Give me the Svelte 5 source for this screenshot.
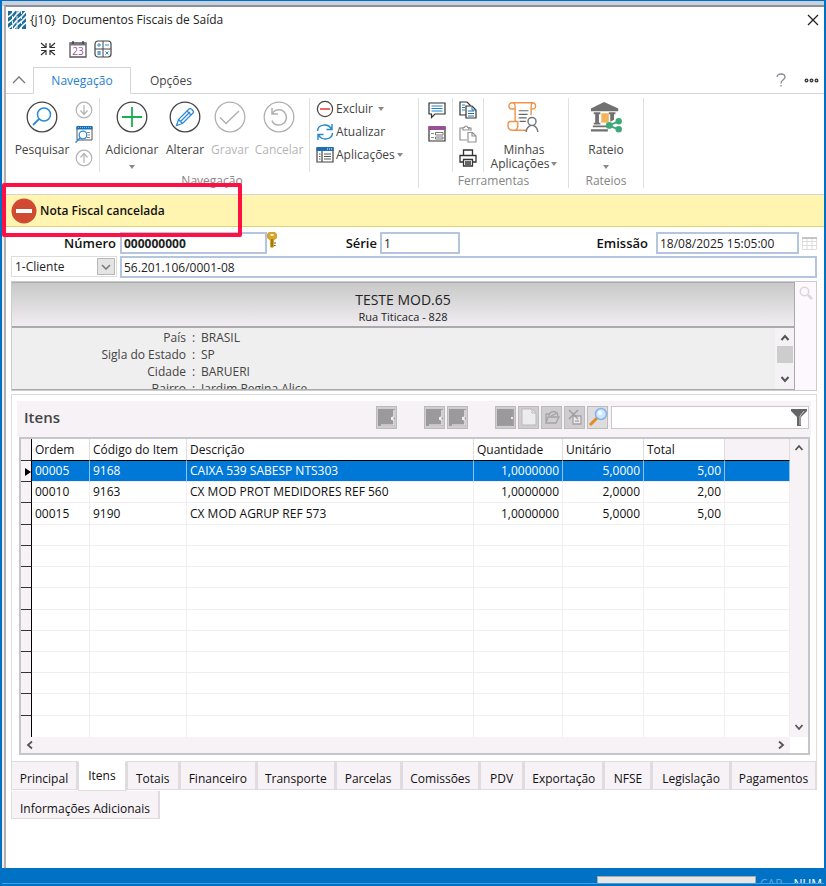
<script>
  const people = [
    ['País', 'BRASIL'],
    ['Sigla do Estado', 'SP'],
    ['Cidade', 'BARUERI'],
    ['Bairro', 'Jardim Regina Alice']
  ];
  const rows = [
    ['00005', '9168', 'CAIXA 539 SABESP NTS303', '1,0000000', '5,0000', '5,00'],
    ['00010', '9163', 'CX MOD PROT MEDIDORES REF 560', '1,0000000', '2,0000', '2,00'],
    ['00015', '9190', 'CX MOD AGRUP REF 573', '1,0000000', '5,0000', '5,00']
  ];
  const blanks = Array.from({ length: 10 });
  const tabs = [
    ['Principal', 67], ['Itens', 48], ['Totais', 52], ['Financeiro', 78],
    ['Transporte', 79], ['Parcelas', 66], ['Comissões', 79], ['PDV', 43],
    ['Exportação', 81], ['NFSE', 47], ['Legislação', 79], ['Pagamentos', 87]
  ];
  let active = $state('Itens');
  let selected = $state(0);
</script>

{#snippet caret()}
  <svg class="caret" width="6" height="4" viewBox="0 0 6 4"><path d="M0 0h6L3 4z" fill="#8a8a8a" /></svg>
{/snippet}

{#snippet door(full)}
  <svg width="20" height="20" viewBox="0 0 20 20"><path d="M1 2h17v17H1z" fill="#a19ea1" /><path d="M1 2h15v16H1z" fill="#9b999c" />{#if full}<path d="M17 3v7h-1v3h1v5H4" fill="none" stroke="#f3f0f3" stroke-width="1.2" /><path d="M14 10h2v3h-2z" fill="#eee" />{:else}<path d="M15 10h2v2h-2z" fill="#eee" />{/if}</svg>
{/snippet}

<div class="screen">
  <div class="window">
    <header class="title">
      <svg width="18" height="18" viewBox="0 0 18 18">
        <path d="M0 0h18v18H0z" fill="#1b6d9c" />
        <path d="M-1 6.500 3 4l4-5M-1 12.500 4 9l4-5 5-5M-1 18.500 5 14l4-5 5-4 5-6M5 19l5-6 4-3 5-5M11 19l4-5 4-3" stroke="#fff" stroke-width="1.600" fill="none" />
        <path d="M4.500 0v18M9 0v18M13.500 0v18" stroke="#fff" stroke-width=".9" stroke-dasharray="3 2" />
      </svg>
      <h1>&#123;j10&#125;&nbsp; Documentos Fiscais de Saída</h1>
      <button class="close" aria-label="Fechar">
        <svg width="12" height="12" viewBox="0 0 12 12"><path d="m1 1 10 10M11 1 1 11" stroke="#222" stroke-width="1.3" /></svg>
      </button>
    </header>

    <div class="quick">
      <button aria-label="Recolher">
        <svg width="16" height="16" viewBox="0 0 16 16" fill="none" stroke="#333" stroke-width="1.2"><path d="m1 2 5 4.500M6 2v4.500H1M15 2l-5 4.500M10 2v4.500h5M1 14l5-4.500M6 14V9.500H1M15 14l-5-4.500M10 14V9.500h5" /></svg>
      </button>
      <button class="date" aria-label="Calendário">
        <svg width="18" height="17" viewBox="0 0 18 17" fill="none"><path d="M1 2h16v14H1z" stroke="#555" stroke-width="1.3" /><path d="M1 2h16v2.500H1z" fill="#777" /><path d="M4 0v3M14 0v3" stroke="#444" stroke-width="1.500" /></svg>
        <span>23</span>
      </button>
      <button aria-label="Calculadora">
        <svg width="18" height="18" viewBox="0 0 18 18" fill="none"><rect x="1" y="1" width="16" height="16" rx="3" stroke="#444" stroke-width="1.200" /><path d="M9 1v16M1 9h16" stroke="#444" /><path d="M3 5h4M5 3v4M11 5h4M3 12h4M5 11v4M3 14h4M11.500 11.500l3 3M14.500 11.500l-3 3M12 13h2" stroke="#2b8bd0" /></svg>
      </button>
    </div>

    <nav class="ribbon-tabs">
      <button class="fold" aria-label="Recolher faixa"><svg width="14" height="8" viewBox="0 0 14 8"><path d="m1 7 6-6 6 6" fill="none" stroke="#777" stroke-width="1.300" /></svg></button>
      <button class="rtab on">Navegação</button>
      <button class="rtab">Opções</button>
      <button class="help" aria-label="Ajuda"><svg width="10" height="14" viewBox="0 0 10 14"><path d="M1 4c0-4 8-4 8 0 0 3-4 2.500-4 6.500M5 12v1.500" fill="none" stroke="#888c98" stroke-width="1.300" /></svg></button>
      <button class="more" aria-label="Mais"><svg width="15" height="5" viewBox="0 0 15 5" fill="#ccc" stroke="#333" stroke-width="1.200"><circle cx="2.500" cy="2.500" r="1.400" /><circle cx="7.500" cy="2.500" r="1.400" /><circle cx="12.500" cy="2.500" r="1.400" /></svg></button>
    </nav>

    <div class="ribbon">
      <section class="group g1">
        <div class="tools">
          <button class="big w60">
            <svg width="32" height="32" viewBox="0 0 32 32" fill="none"><circle cx="16" cy="16" r="14.800" stroke="#444" stroke-width="1.300" /><circle cx="18" cy="13.500" r="6.500" stroke="#2b8bd8" stroke-width="1.500" /><path d="m13 18-6 6" stroke="#2b8bd8" stroke-width="1.800" /></svg>
            <span>Pesquisar</span>
          </button>
          <div class="stack s1">
            <button aria-label="Próximo"><svg width="18" height="18" viewBox="0 0 18 18" fill="none" stroke="#b3b3b3" stroke-width="1.200"><circle cx="9" cy="9" r="7.800" /><path d="M9 4v9.500M5.500 9.500 9 13.500l3.500-4" /></svg></button>
            <button aria-label="Consultar"><svg width="18" height="18" viewBox="0 0 18 18" fill="none"><path d="M2 2h15v13H2z" stroke="#555" /><path d="M1.500 1h16v3.500h-16z" fill="#1c6fb5" /><path d="M3 2.500h13" stroke="#7db9e8" stroke-dasharray="1 1" /><path d="M12 7.500h3M13 10h2M12 12.500h3" stroke="#888" /><circle cx="8" cy="10" r="3.800" fill="#fff" stroke="#2b8bd8" stroke-width="1.300" /><path d="M5.500 12.500.500 17.500" stroke="#2b8bd8" stroke-width="1.500" /></svg></button>
            <button aria-label="Anterior"><svg width="18" height="18" viewBox="0 0 18 18" fill="none" stroke="#b3b3b3" stroke-width="1.200"><circle cx="9" cy="9" r="7.800" /><path d="M9 14V4.500M5.500 8.500 9 4.500l3.500 4" /></svg></button>
          </div>
          <i class="sep"></i>
          <button class="big w64">
            <svg width="32" height="32" viewBox="0 0 32 32" fill="none"><circle cx="16" cy="16" r="14.800" stroke="#444" stroke-width="1.300" /><path d="M16 6v20M6 16h20" stroke="#17b052" stroke-width="1.800" /></svg>
            <span>Adicionar</span>{@render caret()}
          </button>
          <button class="big w42">
            <svg width="32" height="32" viewBox="0 0 32 32" fill="none"><circle cx="16" cy="16" r="14.800" stroke="#444" stroke-width="1.300" /><path d="m7.500 24.500 2-6L20 8c1.500-1.500 5.500 2 4 4L13.500 22.500zM18 10l4 4M9.500 18.500l4 4M11.500 20.500 21 11" stroke="#2b8bd8" stroke-width="1.300" /></svg>
            <span>Alterar</span>
          </button>
          <button class="big w48" disabled>
            <svg width="32" height="32" viewBox="0 0 32 32" fill="none" stroke="#b0b0b0"><circle cx="16" cy="16" r="14.800" stroke-width="1.300" /><path d="m6 16.500 6 6L25 10" stroke-width="1.500" /></svg>
            <span>Gravar</span>
          </button>
          <button class="big w50" disabled>
            <svg width="32" height="32" viewBox="0 0 32 32" fill="none" stroke="#b0b0b0"><circle cx="16" cy="16" r="14.800" stroke-width="1.300" /><path d="M9 7v6h6M9.500 12.500c3-5 10.500-5 13 .5s-1 11-7 11c-3 0-5.500-1.500-6.500-4.500" stroke-width="1.500" /></svg>
            <span>Cancelar</span>
          </button>
          <i class="sep s2"></i>
          <div class="lines">
            <button><svg width="18" height="18" viewBox="0 0 18 18" fill="none"><circle cx="9" cy="9" r="7.600" stroke="#444" stroke-width="1.200" /><path d="M4 9h10" stroke="#e33" stroke-width="1.500" /></svg>Excluir&nbsp; {@render caret()}</button>
            <button><svg width="18" height="18" viewBox="0 0 18 18" fill="none" stroke="#1e86cc" stroke-width="1.400"><path d="M1.500 8C2 1 12 0 15.500 6M16 1v5.500h-5.500M16.500 10C16 17 6 18 2.500 12M2 17v-5.500h5.500" /></svg>Atualizar</button>
            <button><svg width="18" height="18" viewBox="0 0 18 18" fill="none"><path d="M1 2h16v14H1zM6 5v11" stroke="#444" stroke-width="1.200" /><path d="M.500 1h17v4H.500z" fill="#1c6fb5" /><path d="M8 8h7M8 10.500h7M8 13h7M3 8h1.500M3 10.500h1.500M3 13h1.500" stroke="#555" /><path d="M11 3h1M13 3h1M15 3h1" stroke="#fff" /></svg>Aplicações {@render caret()}</button>
          </div>
        </div>
        <h2>Navegação</h2>
      </section>

      <section class="group g2">
        <div class="tools">
          <div class="stack s3">
            <button aria-label="Comentário"><svg width="18" height="18" viewBox="0 0 18 18" fill="none"><path d="M1 2h16v11H7l-3.500 3.500V13H1z" stroke="#333" stroke-width="1.200" /><path d="M3.500 5h11M3.500 7.500h11M3.500 10h11" stroke="#1e86cc" stroke-width="1.200" /></svg></button>
            <button aria-label="Formulário"><svg width="18" height="18" viewBox="0 0 18 18" fill="none"><path d="M1 2h16v14H1z" stroke="#333" stroke-width="1.200" /><path d="M.500 1h17v4H.500z" fill="#9b4f96" /><path d="M3 8.500h3M3 12.500h3" stroke="#888" /><path d="M7.500 7.500h7.500v2.500H7.500zM7.500 12h7.500v2H7.500z" stroke="#777" /></svg></button>
          </div>
          <i class="sep"></i>
          <div class="stack s4">
            <button aria-label="Copiar"><svg width="18" height="18" viewBox="0 0 18 18" fill="none"><path d="M1 1h7l3 3v10H1z" stroke="#333" stroke-width="1.200" fill="#fff" /><path d="M3 4h3M3 6.500h3M3 9h3" stroke="#1e86cc" /><path d="M7 5h6l4 4v8H7z" fill="#fff" stroke="#333" stroke-width="1.200" /><path d="M13 5v4h4M9 10h6M9 12.500h6M9 15h6" stroke="#1e6fb0" /></svg></button>
            <button aria-label="Colar"><svg width="18" height="18" viewBox="0 0 18 18" fill="none" stroke="#929292" stroke-width="1.200"><path d="M8 15H1V3h3M12 6V3H9M4 4V2.500h1.500c0-2 3-2 3 0H10V5H4zM9 7.500h4.500L17 11v6H9zM13 7.500V11h4" /></svg></button>
            <button aria-label="Imprimir"><svg width="18" height="18" viewBox="0 0 18 18" fill="none" stroke="#333" stroke-width="1.300"><path d="M4.500 6V1h9v5M4 13H1V6.500h16V13h-3M4.500 10.500h9V17h-9zM6 13h6M6 15h6" /></svg></button>
          </div>
          <i class="sep"></i>
          <button class="big w80">
            <svg width="36" height="36" viewBox="0 0 36 36" fill="none"><path d="M8 23V6.500C8 4 7 2 5 2h22c3 0 4 1.500 4 4s-1 3-4 3h-1V6c0-3 2-4 2-4M5 2C2 2 1 4 1 6s1 3 3 3h4M26 9v7M8 23H2.500C1 23 0 24 0 27s1.500 6 5 6h16M8 23h3v5c0 3-2 5-5 5" stroke="#f0934b" stroke-width="1.600" /><path d="M12 11h11M12 15h10M12 19h9M13 23h7" stroke="#666" stroke-width="1.300" /><circle cx="27" cy="23" r="4.500" fill="#fff" stroke="#73777e" stroke-width="1.600" /><path d="M20.500 35c0-4 2-6 5-7.500M33.500 35c0-4-2-6-5-7.500" stroke="#73777e" stroke-width="1.600" /></svg>
            <span>Minhas</span><span class="second">Aplicações{@render caret()}</span>
          </button>
        </div>
        <h2>Ferramentas</h2>
      </section>

      <section class="group g3">
        <div class="tools">
          <button class="big w74">
            <svg width="34" height="34" viewBox="0 0 34 34"><path d="M1 8 15 1l15 7v3H1z" fill="#707070" /><path d="M4 12h7v2H9.500v9H11v2H4v-2h1.500v-9H4zM20 12h7v2h-1.500v6L21.500 22v-8H20z" fill="#707070" /><path d="M12 13h8v10h-8z" fill="#f1b45b" /><path d="M3 26h16v2H3zM1 30h18v2.500H1z" fill="#707070" /><path d="m32 21-12 5 12 5" fill="none" stroke="#3fa878" stroke-width="2" /><circle cx="30.500" cy="21.500" r="3.400" fill="#3fa878" /><circle cx="20.500" cy="26" r="3.600" fill="#3fa878" /><circle cx="30.500" cy="30" r="3.400" fill="#3fa878" /></svg>
            <span>Rateio</span>{@render caret()}
          </button>
        </div>
        <h2>Rateios</h2>
      </section>
    </div>

    <div class="alert" role="alert">
      <svg width="26" height="26" viewBox="0 0 26 26"><circle cx="13" cy="13" r="12.500" fill="#cf4a31" /><path d="M5 11h16v4H5z" fill="#fff" /></svg>
      <strong>Nota Fiscal cancelada</strong>
    </div>

    <main>
      <div class="fields">
        <label class="l1" for="numero">Número</label>
        <input id="numero" class="numero" value="000000000" />
        <svg width="10" height="16" viewBox="0 0 10 16"><path d="M2 0h6l2 2v4L7 8.500V15l-2 1-2-1V8.500L0 6V2z" fill="#d5a52c" /><path d="M3.500 2h3v2h-3z" fill="#fff8d0" /><path d="M5 7v8M7 11h2M7 13.500h1.500" stroke="#75520c" /></svg>
        <label class="l2" for="serie">Série</label>
        <input id="serie" class="serie" value="1" />
        <label class="l3" for="emissao">Emissão</label>
        <input id="emissao" class="emissao" value="18/08/2025 15:05:00" />
        <svg class="cal" width="15" height="14" viewBox="0 0 15 14" fill="none"><path d="M.500 1.500h14v12H.500zM.500 5.500h14M.500 9.500h14M5 3v10M10 3v10" stroke="#ddd" /><path d="M0 1h15v2H0z" fill="#c4c4c4" /></svg>
      </div>
      <div class="client">
        <div class="pick">
          <select aria-label="Tipo de cliente"><option>1-Cliente</option></select>
          <span class="drop"><svg width="10" height="6" viewBox="0 0 10 6"><path d="m1 1 4 4 4-4" fill="none" stroke="#777" stroke-width="1.500" /></svg></span>
        </div>
        <input aria-label="CNPJ do cliente" value="56.201.106/0001-08" />
      </div>

      <section class="person">
        <div class="card">
          <div class="head"><h3>TESTE MOD.65</h3><p>Rua Titicaca - 828</p></div>
          <div class="body">
            <dl>
              {#each people as [k, v]}<div><dt>{k}</dt><span>:</span><dd>{v}</dd></div>{/each}
            </dl>
            <div class="vbar">
              <svg width="10" height="8" viewBox="0 0 10 8"><path d="m1.500 6 3.500-4 3.500 4" fill="none" stroke="#555" stroke-width="2" /></svg>
              <i></i>
              <svg width="10" height="8" viewBox="0 0 10 8"><path d="m1.500 2 3.500 4 3.500-4" fill="none" stroke="#555" stroke-width="2" /></svg>
            </div>
          </div>
        </div>
        <button class="side" aria-label="Ampliar"><svg width="14" height="14" viewBox="0 0 14 14" fill="none" stroke="#d8d8d8" stroke-width="1.500"><circle cx="5.500" cy="5.500" r="4.200" /><path d="m9 9 4 4" stroke-width="2.500" /></svg></button>
      </section>

      <section class="items">
        <div class="bar">
          <h3>Itens</h3>
          <div class="btns">
            <button aria-label="Primeiro">{@render door(true)}</button>
            <button class="far" aria-label="Anterior item">{@render door(true)}</button>
            <button aria-label="Próximo item">{@render door(true)}</button>
            <button class="far" aria-label="Último">{@render door(false)}</button>
            <button aria-label="Novo"><svg width="20" height="20" viewBox="0 0 20 20"><path d="M3 2h10l4 4v12H3z" fill="#ececec" stroke="#bbb" /><path d="M13 2v4h4" fill="none" stroke="#bbb" /></svg></button>
            <button aria-label="Abrir"><svg width="20" height="20" viewBox="0 0 20 20" fill="none" stroke="#a5a3a6" stroke-width="1.300"><path d="m4 16 2-6h11l-3 6zM4 16V7h4M7 9c0-4 5-6 8-3M9 9l6-3 1 3" /></svg></button>
            <button aria-label="Excluir item"><svg width="20" height="20" viewBox="0 0 20 20" fill="none" stroke="#a5a3a6" stroke-width="1.300"><path d="M8 9h8v8H8z" fill="#e8e8e8" /><path d="m4 3 9 9M13 3 4 12" stroke="#9c9a9d" /><path d="M10 14h4" /></svg></button>
            <button class="lens" aria-label="Localizar"><svg width="20" height="20" viewBox="0 0 20 20"><path d="m9 11-7 7" stroke="#e48a24" stroke-width="3" /><circle cx="13" cy="7" r="5.500" fill="#cbe8ff" stroke="#89aee8" stroke-width="1.500" /><circle cx="12" cy="6" r="2" fill="#fff" /></svg></button>
          </div>
          <div class="find">
            <input aria-label="Filtrar itens" />
            <svg width="16" height="17" viewBox="0 0 16 17"><path d="M0 0h16v2l-6 6v9H6V8L0 2z" fill="#656565" /><path d="m13 2-4 5v9" fill="none" stroke="#ccc" /></svg>
          </div>
        </div>

        <div class="grid">
          <div class="data">
            <table>
              <colgroup><col class="c0" /><col class="c1" /><col class="c2" /><col /><col class="c4" /><col class="c5" /><col class="c5" /><col class="c7" /></colgroup>
              <thead><tr><td class="mark"></td><th>Ordem</th><th>Código do Item</th><th>Descrição</th><th>Quantidade</th><th>Unitário</th><th>Total</th><td class="rest"></td></tr></thead>
              <tbody>
                {#each rows as row, i}
                  <tr class:sel={selected === i} onclick={() => (selected = i)}>
                    <td class="mark">{#if selected === i}<svg width="6" height="8" viewBox="0 0 6 8"><path d="M0 0v8l6-4z" /></svg>{/if}</td>
                    {#each row as cell, j}<td class:num={j > 2}>{cell}</td>{/each}
                    <td></td>
                  </tr>
                {/each}
                {#each blanks as _}
                  <tr><td class="mark"></td><td></td><td></td><td></td><td></td><td></td><td></td><td></td></tr>
                {/each}
              </tbody>
            </table>
            <div class="vscroll">
              <svg width="10" height="8" viewBox="0 0 10 8"><path d="m1.500 6 3.500-4 3.500 4" fill="none" stroke="#555" stroke-width="1.800" /></svg>
              <svg width="10" height="8" viewBox="0 0 10 8"><path d="m1.500 2 3.500 4 3.500-4" fill="none" stroke="#555" stroke-width="1.800" /></svg>
            </div>
          </div>
          <div class="hscroll">
            <svg width="8" height="10" viewBox="0 0 8 10"><path d="M6 1.500 2 5l4 3.500" fill="none" stroke="#555" stroke-width="1.800" /></svg>
            <svg width="8" height="10" viewBox="0 0 8 10"><path d="m2 1.500 4 3.500-4 3.500" fill="none" stroke="#555" stroke-width="1.800" /></svg>
          </div>
        </div>
      </section>

      <nav class="tabs">
        {#each tabs as [name, w]}
          <button class:on={active === name} style:flex-grow={w} onclick={() => (active = name)}>{name}</button>
        {/each}
      </nav>
      <nav class="tabs more-tabs"><button>Informações Adicionais</button></nav>
    </main>

    <div class="highlight"></div>
  </div>

  <footer><span class="progress"></span><span class="cap">CAP</span><span>NUM</span></footer>
</div>

<style>
  :global(body) { margin: 0; }
  .screen, .screen :global(*) { box-sizing: border-box; }
  .screen {
    font: 12px/16px "Open Sans", "Noto Sans", sans-serif;
    color: #222;
    min-height: 100vh;
    display: flex;
    flex-direction: column;
    border: solid #0072c6;
    border-width: 1px 2px 2px;
    background: linear-gradient(#c9d1df, #c9d1df) 0 0 / 100% 5px no-repeat, #f3edf1;
    overflow: hidden;
  }
  button { font: inherit; color: inherit; background: none; border: 0; padding: 0; margin: 0; white-space: nowrap; }
  h1, h2, h3, p, dl, dd { margin: 0; font: inherit; }
  svg { display: block; flex: none; }
  input, select { font: inherit; color: inherit; border-radius: 0; outline: 0; min-width: 0; }

  .window {
    position: relative;
    flex: 1;
    margin: 4px 0 0 2px;
    border-top: 2px solid #8d9099;
    border-left: 2px solid #b5afb3;
    background: #fff;
  }
  .title { display: flex; align-items: center; height: 26px; padding: 0 5px 0 2px; }
  .title h1 { flex: 1; margin-left: 4px; }
  .quick { display: flex; align-items: center; height: 34px; padding: 0 0 2px 34px; }
  .quick button { position: relative; margin-right: 7px; }
  .quick button:first-child { margin-right: 13px; }
  .date span { position: absolute; left: 0; top: 4px; width: 18px; text-align: center; color: #a64ca6; font-size: 10px; line-height: 12px; }

  .ribbon-tabs { display: flex; height: 27px; border-bottom: 1px solid #d4d4d4; }
  .fold { width: 27px; padding-left: 6px; }
  .rtab { width: 98px; height: 27px; color: #444; border: 1px solid transparent; }
  .rtab + .rtab { width: 80px; }
  .rtab.on { color: #1e7fd0; background: #fff; border-color: #d4d4d4 #d4d4d4 #fff; }
  .help { margin-left: auto; }
  .more { margin: 0 5px 0 18px; }

  .ribbon { display: flex; height: 101px; padding: 4px 0 6px; border-bottom: 1px solid #d4d4d4; color: #444; }
  .group { border-right: 1px solid #e0e0e0; display: flex; flex-direction: column; }
  .group h2 { text-align: center; color: #858585; line-height: 15px; }
  .g1 { width: 413px; }
  .g2 { width: 150px; }
  .g3 { width: 75px; }
  .tools { display: flex; height: 76px; }
  .g1 .tools { padding-left: 6px; }
  .sep { width: 1px; height: 74px; background: #e0e0e0; }
  .s2 { margin-left: 5px; }
  .big { display: flex; flex-direction: column; align-items: center; padding-top: 3px; }
  .big > svg:first-child { height: 32px; overflow: visible; }
  .big span { margin-top: 9px; line-height: 16px; }
  .big > .caret { margin-top: 7px; }
  .w80 span { margin-top: 10px; line-height: 14px; }
  .big .second { margin: 0; display: flex; align-items: center; gap: 2px; }
  .big:disabled { color: #b5b5b5; }
  .w60 { width: 60px; }
  .w64 { width: 64px; }
  .w42 { width: 42px; }
  .w48 { width: 48px; }
  .w50 { width: 50px; }
  .w80 { width: 80px; }
  .w74 { width: 74px; }
  .stack { display: flex; flex-direction: column; gap: 6px; padding-top: 3px; align-items: center; }
  .s1 { width: 27px; padding-right: 3px; }
  .s3 { width: 33px; padding-left: 3px; }
  .s4 { width: 30px; }
  .lines { display: flex; flex-direction: column; gap: 5px; padding: 2px 0 0 6px; }
  .lines button { display: flex; align-items: center; gap: 2px; }

  .alert { display: flex; align-items: center; gap: 3px; height: 32px; padding-left: 5px; background: #fff4b0; border-bottom: 1px solid #d9d676; color: #111; }
  .alert strong { font-weight: 600; padding-top: 1px; }
  main { padding: 5px 7px 0 5px; }
  .fields, .client { display: flex; }
  .fields { height: 24px; padding-bottom: 2px; }
  .fields label { font-size: 13px; font-weight: 600; line-height: 22px; color: #111; text-align: right; }
  .fields input, .client input {
    height: 22px;
    padding: 0 2px;
    border: 2px solid #b4c5e0;
    background: #fff;
    line-height: 16px;
  }
  .client input { flex: 1; }
  .l1 { width: 109px; padding-right: 4px; }
  .fields .numero { width: 147px; font-weight: 700; }
  .l2 { width: 103px; padding-right: 3px; }
  .serie { width: 80px; }
  .l3 { margin-left: auto; padding-right: 8px; }
  .emissao { width: 143px; }
  .cal { margin: 4px 0 0 3px; }
  .pick { position: relative; width: 106px; margin-right: 3px; }
  .pick select { width: 100%; height: 21px; padding: 0 3px; border: 1px solid #ddd; background: #fff; appearance: none; }
  .drop { position: absolute; right: 2px; top: 2px; width: 18px; height: 17px; display: grid; place-items: center; background: #e4e4e4; border: 1px solid #b8b8b8; pointer-events: none; }

  .person { display: flex; height: 110px; margin-top: 3px; border: 1px solid #ccc; }
  .card { flex: 1; border: solid #aaa; border-width: 1px 1px 1px 0; }
  .head { height: 45px; padding-top: 8px; border-bottom: 2px solid #aaa; background: linear-gradient(#c9c9c9, #f0edf0); text-align: center; }
  .head h3 { font-size: 14px; line-height: 18px; }
  .head p { font-size: 11px; }
  .body { display: flex; height: 61px; background: #efefef; overflow: hidden; color: #444; }
  dl { flex: 1; padding-top: 2px; }
  dl div { display: flex; height: 17px; }
  dt { width: 174px; text-align: right; }
  dl span { width: 15px; text-align: center; }
  .vbar { width: 19px; display: flex; flex-direction: column; align-items: center; justify-content: space-between; padding: 6px 0; background: #f5f2f5; }
  .vbar i { width: 16px; height: 17px; margin-bottom: 8px; background: #cdcdcd; }
  .side { width: 21px; background: #fdf8fd; display: flex; justify-content: center; padding-top: 4px; }

  .items { margin-top: 3px; border: 1px solid #ddd; border-bottom: 0; padding: 6px 5px; background: #fff; }
  .bar { display: flex; align-items: center; height: 36px; padding: 0 2px 4px 7px; background: #f7f2f6; }
  .bar h3 { font-size: 15px; font-weight: 600; line-height: 20px; color: #444; }
  .btns { display: flex; gap: 2px; margin-left: auto; }
  .btns button { width: 21px; height: 23px; border: 1px solid #bbb; background: #cfcdcf; display: grid; place-items: center; }
  .btns button.far { margin-left: 25px; }
  .btns .lens { background: #ddd; }
  .find { position: relative; width: 198px; margin-left: 3px; }
  .find input { display: block; width: 100%; height: 23px; border: 1px solid #c9c9cc; }
  .find svg { position: absolute; right: 2px; top: 3px; }

  .grid { margin: 0 1px 0 2px; border: 2px solid #c5c6cc; background: #fff; }
  .data { display: flex; height: 298px; }
  table { flex: 1; height: 298px; border-collapse: separate; border-spacing: 0; table-layout: fixed; width: 100%; color: #111; }
  .c0 { width: 11px; }
  .c1 { width: 58px; }
  .c2 { width: 97px; }
  .c4 { width: 89px; }
  .c5 { width: 81px; }
  .c7 { width: 65px; }
  th, td { padding: 0 3px; font-weight: 400; text-align: left; white-space: nowrap; border: solid #f0eef0; border-width: 0 1px 1px 0; line-height: 16px; }
  thead tr { height: 22px; }
  tbody tr { height: 21px; }
  th, thead td { border-bottom-color: #000; border-right-color: #ddd; }
  td.num { text-align: right; }
  .mark, thead .mark { padding: 0; background: #f7f2f6; border-bottom: 1px solid #333; border-right: 1px solid #000; }
  .mark svg { margin: 2px 0 0 4px; }
  .rest { background: #f7f2f6; }
  .sel td:not(.mark) { background: #0078d7; color: #fff; border-right-color: #8fc2ee; }
  tbody tr:last-child td { border-bottom: 0; }
  .vscroll { width: 18px; background: #f7f2f6; display: flex; flex-direction: column; align-items: center; justify-content: space-between; padding: 5px 0 6px; }
  .hscroll { height: 16px; margin-right: 18px; padding: 0 5px; display: flex; justify-content: space-between; align-items: center; background: #f7f2f6; }

  .tabs { display: flex; }
  .tabs button { flex: 1 1 0; min-width: 0; height: 29px; padding-top: 7px; background: #f7f2f6; border: solid #dfdbdf; border-width: 1px 2px 1px 1px; color: #111; }
  .tabs .on { height: 30px; padding: 0; background: #fff; border-top-color: #fff; }
  .more-tabs button { flex: none; height: 28px; padding: 9px 8px 0; border-top: 0; }

  .highlight { position: absolute; left: -4px; top: 176px; width: 240px; height: 54px; border: 4px solid #ff0f42; border-radius: 2px; pointer-events: none; }

  footer { display: flex; justify-content: flex-end; height: 16px; padding: 8px 2px 0 0; background: #0072c6; color: #fff; border-bottom: 1px solid #4a9bdb; overflow: hidden; }
  .progress { width: 159px; height: 8px; margin-right: 4px; background: #e6e6e6; border: 1px solid #aaa; border-bottom: 0; }
  .cap { color: #5fa8dd; margin-right: 11px; }
</style>
